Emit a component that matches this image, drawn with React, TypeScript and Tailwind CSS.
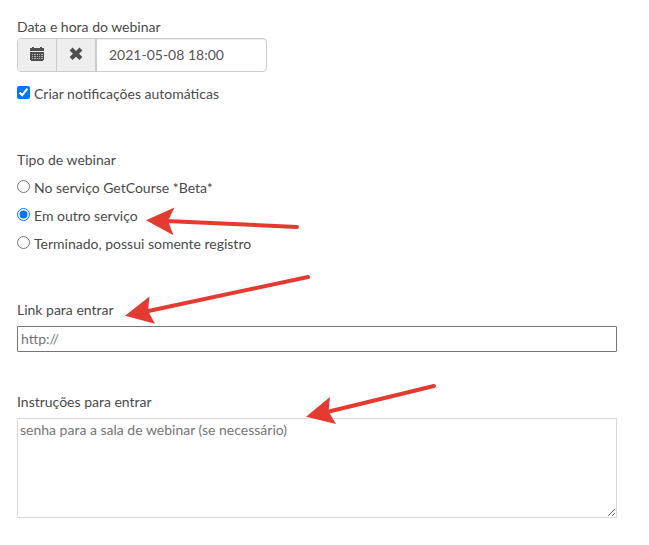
import React, { useState } from 'react';

const CalendarIcon = () => (
  <svg viewBox="0 0 14 14" className="w-3.5 h-3.5" fill="#4f4f4f" shapeRendering="crispEdges" aria-hidden="true">
    <path d="M2 0h2v1h6V0h2v1h2v3H0V1h2z" />
    <path d="M0 5h14v8h-1v1H1v-1H0z" />
    <path fill="#b5b5b5" d="M2 7h1v1H2zM4 7h2v1H4zM7 7h1v1H7zM9 7h1v1H9zM11 7h2v1h-2zM2 9h1v1H2zM4 9h2v1H4zM7 9h1v1H7zM9 9h1v1H9zM11 9h2v1h-2zM2 11h1v1H2zM4 11h2v1H4zM7 11h1v1H7zM9 11h1v1H9zM11 11h2v1h-2z" />
  </svg>
);

const RemoveIcon = () => (
  <svg viewBox="0 0 14 14" className="w-3.5 h-3.5" fill="#4f4f4f" aria-hidden="true">
    <path d="M3.6 0.6 7 4l3.4-3.4 3 3L10 6.8l3.4 3.2-3 3L7 9.7 3.6 13l-3-3L4 6.8.6 3.6z" />
  </svg>
);

// Hints drawn over the form, each one ends at the field to fill in
const HintArrows = () => (
  <svg
    viewBox="0 0 450 450"
    className="absolute left-0 top-0 w-[450px] h-[450px] pointer-events-none"
    fill="#e53a30"
    stroke="#e53a30"
    strokeLinecap="round"
    aria-hidden="true"
  >
    <path stroke="none" d="M146 220.3 174.5 207.5 168 221 173.5 235.3z" />
    <path strokeWidth="4" d="M166 221 297 227" />
    <path stroke="none" d="M125 315.8 149.5 296.5 148 311 155 323.7z" />
    <path strokeWidth="4" d="M146 311.5 308 277" />
    <path stroke="none" d="M306 416.8 330 397 328.5 411.5 336 424z" />
    <path strokeWidth="4" d="M327 412 434 386" />
  </svg>
);

const webinarTypes = [
  { value: 'getcourse', label: 'No serviço GetCourse *Beta*' },
  { value: 'external', label: 'Em outro serviço' },
  { value: 'finished', label: 'Terminado, possui somente registro' },
];

const App = () => {
  const [date, setDate] = useState('2021-05-08 18:00');
  const [notify, setNotify] = useState(true);
  const [type, setType] = useState('external');

  return (
    <main className="relative min-h-screen bg-white px-[17px] pt-[17px] pb-6 font-['Lato','Open_Sans',sans-serif] text-sm leading-5 text-[#4a4a4a]">
      <form className="max-w-[600px]" onSubmit={(e) => e.preventDefault()}>
        <label htmlFor="date" className="block mb-px">Data e hora do webinar</label>
        <div className="flex w-[250px] h-[34px] rounded border border-[#cccccc] overflow-hidden">
          <button type="button" aria-label="Abrir calendário" className="w-[39px] pb-0.5 flex items-center justify-center bg-[#eeeeee] border-r border-[#cccccc]">
            <CalendarIcon />
          </button>
          <button type="button" aria-label="Limpar data" className="w-10 pb-0.5 flex items-center justify-center bg-[#eeeeee] border-r-2 border-[#cccccc]">
            <RemoveIcon />
          </button>
          <input
            id="date"
            type="text"
            value={date}
            onChange={(e) => setDate(e.target.value)}
            className="flex-1 min-w-0 px-3 text-[#555555] shadow-[inset_0_1px_1px_rgba(0,0,0,0.075)] outline-none"
          />
        </div>

        <label className="mt-3 flex items-center gap-1">
          <input
            type="checkbox"
            checked={notify}
            onChange={(e) => setNotify(e.target.checked)}
            className="w-[13px] h-[13px] mb-1"
          />
          Criar notificações automáticas
        </label>

        <fieldset className="mt-[46px]">
          <legend className="mb-2">Tipo de webinar</legend>
          <div className="flex flex-col gap-2">
            {webinarTypes.map((item) => (
              <label key={item.value} className="flex items-center gap-1">
                <input
                  type="radio"
                  name="type"
                  value={item.value}
                  checked={type === item.value}
                  onChange={() => setType(item.value)}
                  className="w-[13px] h-[13px] mb-1"
                />
                {item.label}
              </label>
            ))}
          </div>
        </fieldset>

        <div className="mt-[46px]">
          <label htmlFor="link" className="block mb-1.5">Link para entrar</label>
          <input
            id="link"
            type="text"
            placeholder="http://"
            className="block w-full h-[26px] px-[3px] pb-0.5 rounded-[1px] border border-[#767676] placeholder:text-[#757575]"
          />
        </div>

        <div className="mt-10">
          <label htmlFor="instructions" className="block mb-1.5">Instruções para entrar</label>
          <textarea
            id="instructions"
            placeholder="senha para a sala de webinar (se necessário)"
            className="block w-full h-[100px] px-0.5 py-px border border-[#d9d9d9] placeholder:text-[#757575]"
          />
        </div>
      </form>
      <HintArrows />
    </main>
  );
};

export default App;
